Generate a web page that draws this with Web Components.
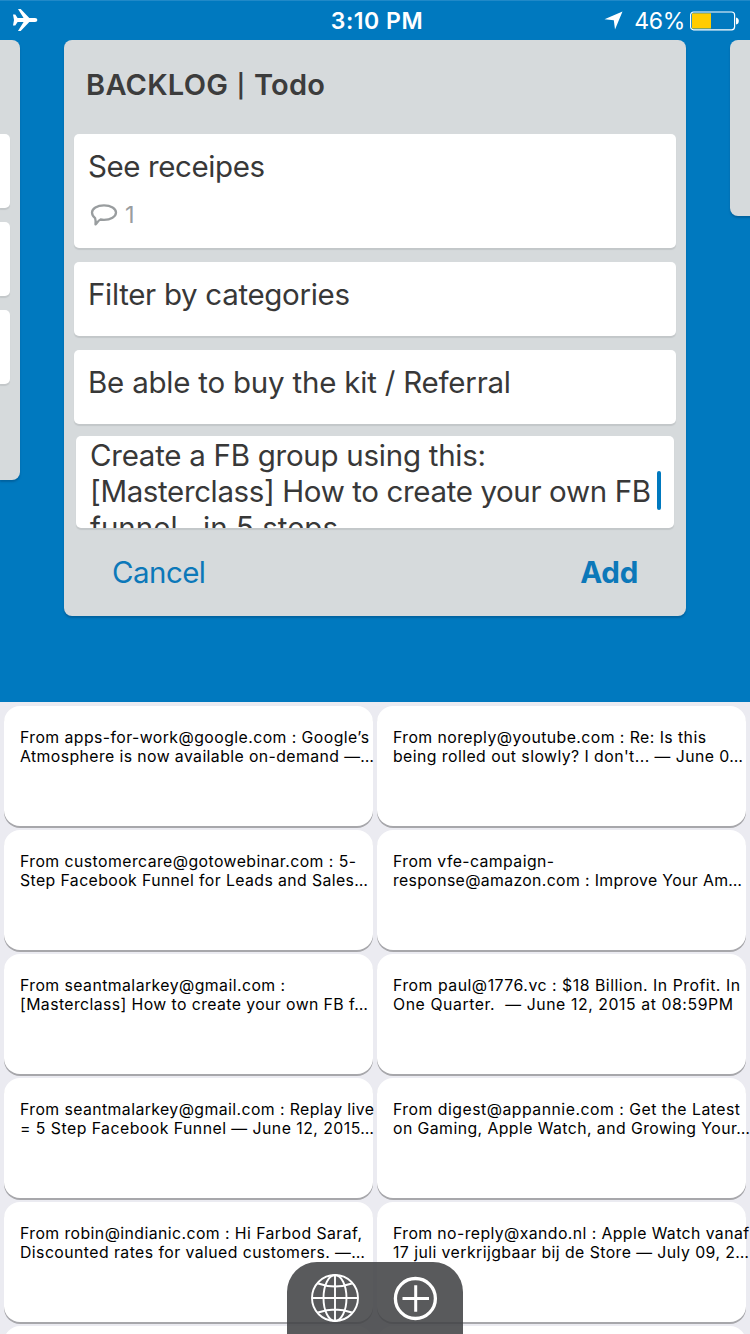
<!DOCTYPE html>
<html lang="en"><head><meta charset="utf-8"><title>Board</title>
<style>
body{margin:0;width:750px;height:1334px;overflow:hidden;font-family:Inter,"Liberation Sans",sans-serif;background:#0079bf}
</style></head><body>
<app-screen></app-screen>
<script>
const define=(name,html,ready)=>customElements.define(name,class extends HTMLElement{
  connectedCallback(){
    if(this.shadowRoot)return;
    const t=document.createElement('template');t.innerHTML=html;
    this.attachShadow({mode:'open'}).append(t.content.cloneNode(true));
    if(ready)ready(this,this.shadowRoot);
  }
});

/* One line of text, tracked so that it spans the width in its w attribute. */
define('text-line',`<style>:host{display:block;white-space:pre}span{display:inline-block}</style><span><slot></slot></span>`,(host,root)=>{
  const s=root.querySelector('span'),w=+host.getAttribute('w');
  if(!w)return;
  s.style.letterSpacing=((w-s.getBoundingClientRect().width)/(host.textContent.length-1)).toFixed(3)+'px';
});

define('status-bar',`<style>
:host{display:grid;grid-template-columns:1fr auto 1fr;align-items:center;height:40px;box-sizing:border-box;padding:1px 11px 0 12px;color:#fff;font-size:23px;line-height:38px;border-top:1px solid #2089c8}
.time{font-weight:600;padding-left:3px}.right{display:flex;justify-content:flex-end;align-items:center}svg{display:block}.plane{margin-top:-2px}
.loc{margin:-1px 11px 0 0}.bat{margin-left:5px}
</style>
<svg class="plane" width="26" height="24" viewBox="0 0 26 24" fill="#fff"><path d="M1 6.600h2.300l2.300 3.400h6L6 1h2.700l8.600 9h5.700c1.500 0 2.300.9 2.300 2s-.8 2-2.300 2h-5.700l-8.600 9H6l5.600-9h-6l-2.300 3.400H1l1-5.400z"/></svg>
<text-line class="time" w="92">3:10 PM</text-line>
<div class="right"><svg class="loc" width="19" height="19" viewBox="0 0 19 19"><path d="M18.500.5 11 18.500 9.800 9.300.5 8.300z" fill="#fff"/></svg>
<text-line w="51">46%</text-line>
<svg class="bat" width="49" height="20" viewBox="0 0 49 20"><rect x=".6" y="1" width="44" height="17.800" rx="3" fill="none" stroke="#fff" stroke-width="1.200"/><path d="M2 2.300h19v15.200H2z" fill="#fc0"/><path d="M46 6.500q2.800.5 2.800 3.500T46 13.500z" fill="#fff"/></svg></div>`);

define('board-list',`<style>:host{display:flex;flex-direction:column;box-sizing:border-box;background:#d6dadc;border-radius:8px;box-shadow:0 2px 2px #00548a99;flex:none}</style><slot></slot>`);

define('board-card',`<style>:host{display:block;box-sizing:border-box;height:74px;margin:0 10px 14px;padding:13px 14px;background:#fff;border-radius:5px;box-shadow:0 2px 1px #c3c7c9;font-size:29.500px;line-height:38px;color:#383838;flex:none}</style><slot></slot>`);

define('comment-badge',`<style>:host{display:flex;align-items:center;height:30px;margin-top:15px;gap:7px;padding-left:2px;font-size:23.500px;line-height:30px;color:#999d9f}svg{display:block}</style>
<svg width="28" height="24" viewBox="0 0 28 24" fill="none" stroke="#999d9f" stroke-width="2.300" stroke-linejoin="round"><path d="M14 2.400c7 0 12 3.100 12 7.200s-5.300 7.200-12 7.200c-1.300 0-2.500-.1-3.500-.3-2 .8-3 2.800-5 4.900.2-2.600.3-4.300-.4-6.300C3 13.500 2 11.700 2 9.600c0-4.100 5-7.200 12-7.200z"/></svg><slot></slot>`);

define('card-composer',`<style>
:host{display:block}
.box{position:relative;height:92px;margin:-2px 12px 0;background:#fff;border-radius:5px;box-shadow:0 2px 1px #c3c7c9}
.text{height:92px;box-sizing:border-box;padding:1px 14px 0;overflow:hidden;font-size:29.500px;line-height:36px;color:#383838}
.caret{position:absolute;left:581px;top:35px;width:4px;height:39px;border-radius:2px;background:#0079bf}
.actions{display:flex;justify-content:space-between;padding:24px 48px 0;font-size:29.500px;line-height:40px;color:#0c78b9}
.add{font-weight:700}
</style>
<div class="box"><div class="text"><text-line w="396">Create a FB group using this:</text-line><text-line w="561">[Masterclass] How to create your own FB</text-line><text-line w="248">funnel...in 5 steps</text-line></div><div class="caret"></div></div>
<div class="actions"><text-line w="94">Cancel</text-line><text-line class="add" w="58">Add</text-line></div>`);

define('board-view',`<style>
:host{display:flex;gap:44px;align-items:flex-start;height:662px;width:750px;overflow:hidden}
.prev{width:20px;height:440px;padding-top:94px;border-radius:0 8px 8px 0}
.prev board-card{margin:0 10px 14px 0;padding:0;border-radius:0 5px 5px 0}
.main{width:622px;height:576px}.next{width:40px;height:176px}
.title{height:94px;box-sizing:border-box;padding:25px 22px 0;font-weight:600;font-size:29px;line-height:40px;color:#3c3c3c}
.bar{font-size:23px;position:relative;top:-1px;margin:0 1px}
.first{height:114px}
</style>
<board-list class="prev"><board-card></board-card><board-card></board-card><board-card></board-card></board-list>
<board-list class="main"><text-line class="title" w="239">BACKLOG <span class="bar">|</span> Todo</text-line>
<board-card class="first"><text-line w="177">See receipes</text-line><comment-badge>1</comment-badge></board-card>
<board-card><text-line w="262">Filter by categories</text-line></board-card>
<board-card><text-line w="423">Be able to buy the kit / Referral</text-line></board-card>
<card-composer></card-composer></board-list>
<board-list class="next"></board-list>`);

define('snippet-key',`<style>:host{display:block;box-sizing:border-box;height:120px;padding:22px 0 0 16px;background:#fff;border-radius:16px;box-shadow:0 2px 0 #a7a7ab;font-size:15.800px;line-height:19px;color:#000}</style><slot></slot>`);

define('snippet-keyboard',`<style>
:host{display:grid;grid-template-columns:369px 369px;grid-auto-rows:120px;gap:4px;padding:4px;box-sizing:border-box;height:632px;overflow:hidden;background:#ebebf1}
</style>
<snippet-key><text-line w="349">From apps-for-work@google.com : Google’s</text-line><text-line w="354">Atmosphere is now available on-demand —…</text-line></snippet-key>
<snippet-key><text-line w="313">From noreply@youtube.com : Re: Is this</text-line><text-line w="350">being rolled out slowly? I don't... — June 0…</text-line></snippet-key>
<snippet-key><text-line w="336">From customercare@gotowebinar.com : 5-</text-line><text-line w="348">Step Facebook Funnel for Leads and Sales…</text-line></snippet-key>
<snippet-key><text-line w="161">From vfe-campaign-</text-line><text-line w="349">response@amazon.com : Improve Your Am…</text-line></snippet-key>
<snippet-key><text-line w="265">From seantmalarkey@gmail.com :</text-line><text-line w="348">[Masterclass] How to create your own FB f…</text-line></snippet-key>
<snippet-key><text-line w="347">From paul@1776.vc : $18 Billion. In Profit. In</text-line><text-line w="340">One Quarter.  — June 12, 2015 at 08:59PM</text-line></snippet-key>
<snippet-key><text-line w="354">From seantmalarkey@gmail.com : Replay live</text-line><text-line w="354">= 5 Step Facebook Funnel — June 12, 2015…</text-line></snippet-key>
<snippet-key><text-line w="347">From digest@appannie.com : Get the Latest</text-line><text-line w="357">on Gaming, Apple Watch, and Growing Your…</text-line></snippet-key>
<snippet-key><text-line w="342">From robin@indianic.com : Hi Farbod Saraf,</text-line><text-line w="345">Discounted rates for valued customers. —…</text-line></snippet-key>
<snippet-key><text-line w="356">From no-reply@xando.nl : Apple Watch vanaf</text-line><text-line w="356">17 juli verkrijgbaar bij de Store — July 09, 2…</text-line></snippet-key>
<snippet-key></snippet-key><snippet-key></snippet-key>`);

define('keyboard-dock',`<style>:host{position:absolute;left:287px;top:1262px;width:176px;height:72px;box-sizing:border-box;padding:11px 24px 0;display:flex;justify-content:space-between;background:rgba(66,67,69,.88);border-radius:30px 30px 0 0}svg{display:block}</style>
<svg width="49" height="50" viewBox="0 0 49 50" fill="none" stroke="#fff" stroke-width="1.900"><circle cx="24" cy="25" r="23"/><ellipse cx="24" cy="25" rx="11.500" ry="23"/><path d="M24 2v46M1 25h46M7.200 10.500q16.800 6 33.600 0M7.200 39.500q16.800-6 33.600 0"/></svg>
<svg width="48" height="50" viewBox="0 0 48 50" fill="none" stroke="#fff"><circle cx="24.400" cy="25.500" r="20" stroke-width="3.300"/><path d="M11.500 25.500h26.500M24.700 12.200v26.600" stroke-width="3"/></svg>`);

define('app-screen',`<style>:host{display:block;position:relative;width:750px;height:1334px;overflow:hidden;background:#0079bf}</style>
<status-bar></status-bar><board-view></board-view><snippet-keyboard></snippet-keyboard><keyboard-dock></keyboard-dock>`);
</script></body></html>
